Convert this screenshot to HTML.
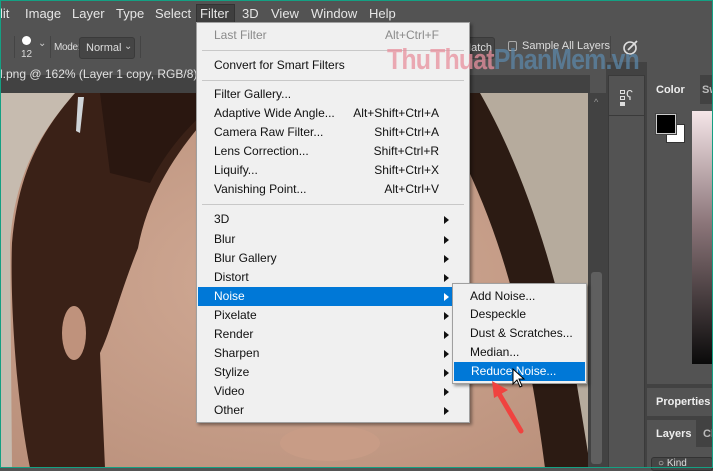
<!DOCTYPE html>
<html><head><style>
*{margin:0;padding:0;box-sizing:border-box}
body{width:713px;height:468px;overflow:hidden;background:#535353;font-family:"Liberation Sans",sans-serif;position:relative}
.a{position:absolute}
.mb span{position:absolute;top:6px;font-size:13px;color:#e6e6e6}
.menu{position:absolute;background:#f0f0f0;border:1px solid #a0a0a0;box-shadow:2px 2px 3px rgba(0,0,0,.4)}
.it{position:absolute;left:0;right:0;height:19px;font-size:12px;color:#111;line-height:19px}
.it .t{position:absolute;left:17px}
.it .s{position:absolute;right:30px}
.it .r{position:absolute;left:247px;top:6px;width:0;height:0;border-left:5px solid #111;border-top:4px solid transparent;border-bottom:4px solid transparent}
.sep{position:absolute;left:5px;right:5px;height:1px;background:#c8c8c8}
.hl{background:#0078d7;color:#fff}
.hl .r{border-left-color:#fff}
</style></head><body>
<div class="mb">
<span style="left:0">lit</span><span style="left:25px">Image</span><span style="left:72px">Layer</span><span style="left:116px">Type</span><span style="left:155px">Select</span>
<div class="a" style="left:196px;top:4px;width:39px;height:19px;background:#3f3f3f;border:1px solid #333"></div>
<span style="left:200px">Filter</span><span style="left:242px">3D</span><span style="left:271px">View</span><span style="left:311px">Window</span><span style="left:369px">Help</span>
</div>
<div class="a" style="left:0;top:30px;width:713px;height:32px;background:#535353"></div>
<div class="a" style="left:14px;top:36px;width:1px;height:22px;background:#444"></div>
<div class="a" style="left:22px;top:36px;width:9px;height:9px;border-radius:50%;background:#fff"></div>
<div class="a" style="left:21px;top:49px;font-size:10px;color:#ddd">12</div>
<div class="a" style="left:38px;top:38px;font-size:10px;color:#ccc">⌄</div>
<div class="a" style="left:50px;top:36px;width:1px;height:22px;background:#444"></div>
<div class="a" style="left:54px;top:42px;font-size:10px;color:#ddd;letter-spacing:-.3px">Mode:</div>
<div class="a" style="left:79px;top:37px;width:56px;height:22px;background:#454545;border:1px solid #3a3a3a;border-radius:3px;font-size:11px;color:#ddd;padding:4px 6px">Normal</div>
<div class="a" style="left:124px;top:41px;font-size:10px;color:#ccc">⌄</div>
<div class="a" style="left:140px;top:36px;width:1px;height:22px;background:#444"></div>
<div class="a" style="left:458px;top:37px;width:37px;height:22px;background:#454545;border:1px solid #3a3a3a;border-radius:3px;font-size:11px;color:#ddd;padding:4px 3px 0 3px;text-align:right">Match</div>
<div class="a" style="left:508px;top:41px;width:9px;height:10px;border:1px solid #aaa;border-radius:2px"></div>
<div class="a" style="left:522px;top:40px;font-size:11px;color:#ddd">Sample All Layers</div>
<div class="a" style="left:610px;top:36px;width:1px;height:22px;background:#444"></div>
<svg class="a" style="left:622px;top:38px" width="18" height="18"><circle cx="8" cy="10" r="6" fill="none" stroke="#ddd" stroke-width="1.6"/><path d="M6 12 L15 3" stroke="#ddd" stroke-width="1.8"/></svg>
<div class="a" style="left:0;top:62px;width:588px;height:30px;background:#535353"></div>
<div class="a" style="left:0;top:75px;width:590px;height:18px;background:#424242"></div>
<div class="a" style="left:0;top:67px;font-size:12px;color:#e0e0e0">l.png @ 162% (Layer 1 copy, RGB/8) *</div>
<svg class="a" style="left:0;top:93px" width="588" height="375">
<defs><radialGradient id="sk" cx="0.5" cy="0.5" r="0.7"><stop offset="0" stop-color="#d2ab96"/><stop offset="1" stop-color="#b98f7a"/></radialGradient></defs>
<rect width="588" height="375" fill="url(#sk)"/>
<path d="M0 0 L75 0 C40 40 15 80 10 150 L12 375 L0 375Z" fill="#c6bbaf"/>
<path d="M75 0 L230 0 C190 40 150 90 138 155 C120 200 110 240 100 260 L105 375 L30 375 C15 300 10 200 12 150 C18 80 40 40 75 0Z" fill="#3a2117"/>
<path d="M100 0 L230 0 C200 20 170 50 150 90 L110 80Z" fill="#2a1710"/>
<ellipse cx="74" cy="240" rx="12" ry="27" fill="#bf927c"/>
<path d="M78 4 L84 4 L80 40 L76 38Z" fill="#cfd4d8"/>
<ellipse cx="100" cy="380" rx="5" ry="6" fill="#e6d8b0"/>
<path d="M455 0 L588 0 L588 375 L588 375 C570 260 540 170 480 60 Z" fill="#b6ab9d"/>
<path d="M455 0 L480 0 C520 70 555 170 575 280 L588 360 L588 375 L545 375 C530 260 510 160 460 60Z" fill="#2c1b13"/>
<ellipse cx="330" cy="350" rx="50" ry="18" fill="#c89c86"/>
</svg>
<div class="a" style="left:588px;top:93px;width:18px;height:375px;background:#424242"></div>
<div class="a" style="left:591px;top:272px;width:11px;height:192px;background:#5f5f5f;border-radius:3px"></div>
<div class="a" style="left:594px;top:97px;font-size:9px;color:#999">^</div>
<div class="a" style="left:606px;top:62px;width:41px;height:406px;background:#424242"></div>
<div class="a" style="left:608px;top:75px;width:37px;height:393px;background:#535353;border:1px solid #3a3a3a"></div>
<div class="a" style="left:608px;top:115px;width:37px;height:1px;background:#3a3a3a"></div>
<div class="a" style="left:620px;top:90px;width:5px;height:4px;border:1px solid #ddd"></div>
<div class="a" style="left:620px;top:96px;width:5px;height:4px;border:1px solid #ddd"></div>
<div class="a" style="left:620px;top:102px;width:5px;height:4px;background:#ddd"></div>
<div class="a" style="left:626px;top:87px;font-size:14px;color:#ddd">ʕ</div>
<div class="a" style="left:647px;top:75px;width:66px;height:393px;background:#424242"></div>
<div class="a" style="left:647px;top:75px;width:53px;height:30px;background:#535353"></div>
<div class="a" style="left:656px;top:84px;font-size:11px;font-weight:bold;color:#eee">Color</div>
<div class="a" style="left:702px;top:84px;font-size:11px;font-weight:bold;color:#bbb">Sw</div>
<div class="a" style="left:647px;top:104px;width:66px;height:280px;background:#535353"></div>
<div class="a" style="left:666px;top:124px;width:19px;height:19px;background:#fff;border:1px solid #333"></div>
<div class="a" style="left:656px;top:114px;width:20px;height:20px;background:#000;border:1px solid #ccc;outline:1px solid #444"></div>
<div class="a" style="left:692px;top:111px;width:21px;height:253px;background:linear-gradient(#f5e6e8,#8a7478 45%,#0a0a0a)"></div>
<div class="a" style="left:647px;top:388px;width:66px;height:28px;background:#535353"></div>
<div class="a" style="left:656px;top:396px;font-size:11px;font-weight:bold;color:#eee">Properties</div>
<div class="a" style="left:647px;top:420px;width:49px;height:27px;background:#535353"></div>
<div class="a" style="left:656px;top:428px;font-size:11px;font-weight:bold;color:#eee">Layers</div>
<div class="a" style="left:703px;top:428px;font-size:11px;font-weight:bold;color:#bbb">Cl</div>
<div class="a" style="left:647px;top:447px;width:66px;height:21px;background:#535353"></div>
<div class="a" style="left:651px;top:457px;width:62px;height:14px;border:1px solid #333;border-radius:3px;background:#454545;font-size:10px;color:#ddd;padding-left:6px">○ Kind</div>
<div class="menu" style="left:196px;top:22px;width:274px;height:401px">
<div class="it" style="top:3px;color:#8a8a8a"><span class="t">Last Filter</span><span class="s">Alt+Ctrl+F</span></div>
<div class="sep" style="top:27px"></div>
<div class="it" style="top:33px"><span class="t">Convert for Smart Filters</span></div>
<div class="sep" style="top:57px"></div>
<div class="it" style="top:62px"><span class="t">Filter Gallery...</span></div>
<div class="it" style="top:81px"><span class="t">Adaptive Wide Angle...</span><span class="s">Alt+Shift+Ctrl+A</span></div>
<div class="it" style="top:100px"><span class="t">Camera Raw Filter...</span><span class="s">Shift+Ctrl+A</span></div>
<div class="it" style="top:119px"><span class="t">Lens Correction...</span><span class="s">Shift+Ctrl+R</span></div>
<div class="it" style="top:138px"><span class="t">Liquify...</span><span class="s">Shift+Ctrl+X</span></div>
<div class="it" style="top:157px"><span class="t">Vanishing Point...</span><span class="s">Alt+Ctrl+V</span></div>
<div class="sep" style="top:181px"></div>
<div class="it" style="top:187px"><span class="t">3D</span><span class="r"></span></div>
<div class="it" style="top:207px"><span class="t">Blur</span><span class="r"></span></div>
<div class="it" style="top:226px"><span class="t">Blur Gallery</span><span class="r"></span></div>
<div class="it" style="top:245px"><span class="t">Distort</span><span class="r"></span></div>
<div class="it hl" style="top:264px;left:1px;right:16px"><span class="t" style="left:16px">Noise</span><span class="r" style="left:246px"></span></div>
<div class="it" style="top:283px"><span class="t">Pixelate</span><span class="r"></span></div>
<div class="it" style="top:302px"><span class="t">Render</span><span class="r"></span></div>
<div class="it" style="top:321px"><span class="t">Sharpen</span><span class="r"></span></div>
<div class="it" style="top:340px"><span class="t">Stylize</span><span class="r"></span></div>
<div class="it" style="top:359px"><span class="t">Video</span><span class="r"></span></div>
<div class="it" style="top:378px"><span class="t">Other</span><span class="r"></span></div>
</div>
<div class="menu" style="left:452px;top:283px;width:135px;height:101px">
<div class="it" style="top:3px"><span class="t">Add Noise...</span></div>
<div class="it" style="top:21px"><span class="t">Despeckle</span></div>
<div class="it" style="top:40px"><span class="t">Dust &amp; Scratches...</span></div>
<div class="it" style="top:59px"><span class="t">Median...</span></div>
<div class="it hl" style="top:78px;left:1px;right:1px"><span class="t" style="left:17px">Reduce Noise...</span></div>
</div>
<div class="a" style="left:387px;top:44px;font-size:29px;font-weight:bold;letter-spacing:-1px;transform:scaleX(.86);transform-origin:left;white-space:nowrap;opacity:.75"><span style="color:#e8909e">ThuThuat</span><span style="color:#5b86a8">PhanMem.vn</span></div>
<svg class="a" style="left:512px;top:368px" width="14" height="22"><path d="M1 1 L1 16 L5 12 L8 19 L10 18 L7 11 L12 11Z" fill="#fff" stroke="#000" stroke-width="1"/></svg>
<svg class="a" style="left:488px;top:378px" width="40" height="60"><path d="M33 53 L10 14" stroke="#f0433f" stroke-width="5" stroke-linecap="round"/><path d="M4 3 L20 12 L6 20Z" fill="#f0433f"/></svg>
<div class="a" style="left:0;top:0;width:713px;height:468px;border:1px solid #14a083;pointer-events:none"></div>
</body></html>
